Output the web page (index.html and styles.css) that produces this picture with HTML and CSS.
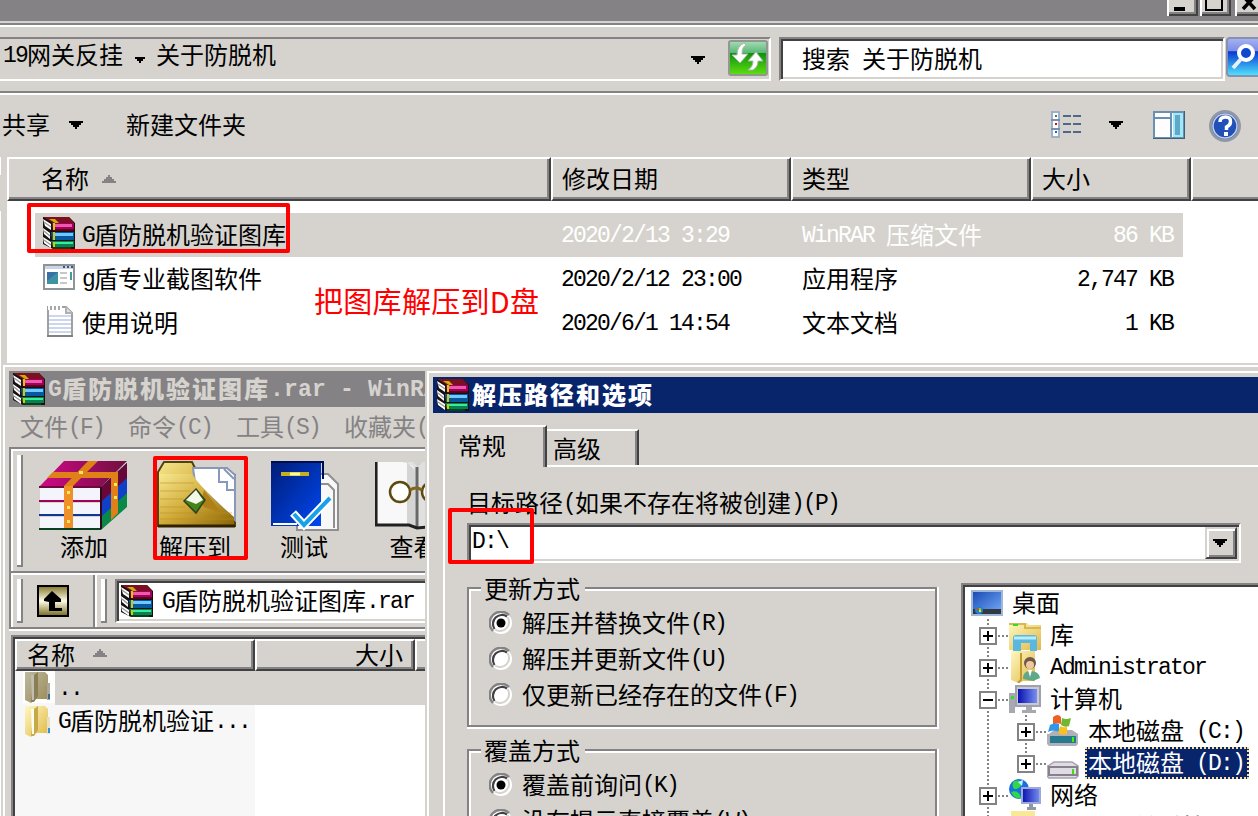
FILE: index.html
```html
<!DOCTYPE html>
<html lang="zh-CN">
<head>
<meta charset="utf-8">
<title>解压路径和选项</title>
<link rel="stylesheet" href="styles.css">
</head>
<body>
<svg class="defs" width="0" height="0" aria-hidden="true">
  <defs>
    <linearGradient id="gGreen" x1="0" y1="0" x2="0" y2="1"><stop offset="0" stop-color="#a8dcb8"/><stop offset=".34" stop-color="#5cb878"/><stop offset=".36" stop-color="#109010"/><stop offset="1" stop-color="#60e010"/></linearGradient>
    <linearGradient id="gBlue" x1="0" y1="0" x2="0" y2="1"><stop offset="0" stop-color="#a8b4f0"/><stop offset=".34" stop-color="#7c8ce8"/><stop offset=".36" stop-color="#0838d0"/><stop offset="1" stop-color="#50e8ff"/></linearGradient>
    <linearGradient id="gGold" x1="0" y1="0" x2="1" y2="1"><stop offset="0" stop-color="#f8e890"/><stop offset=".5" stop-color="#d0aa38"/><stop offset="1" stop-color="#8a6404"/></linearGradient>
    <linearGradient id="gFolder" x1="0" y1="0" x2="1" y2="1"><stop offset="0" stop-color="#fff8c0"/><stop offset="1" stop-color="#e0b848"/></linearGradient>
    <linearGradient id="gPlum" x1="0" y1="0" x2="1" y2="0"><stop offset="0" stop-color="#d00888"/><stop offset="1" stop-color="#70103c"/></linearGradient>
    <linearGradient id="gScreen" x1="0" y1="0" x2="1" y2="0"><stop offset="0" stop-color="#0810b0"/><stop offset="1" stop-color="#7890f0"/></linearGradient>
    <linearGradient id="gDesk" x1="0" y1="0" x2="1" y2="1"><stop offset="0" stop-color="#1848b0"/><stop offset="1" stop-color="#78b0ff"/></linearGradient>
    <linearGradient id="gUp" x1="0" y1="0" x2="0" y2="1"><stop offset="0" stop-color="#807428"/><stop offset=".5" stop-color="#fffce8"/><stop offset="1" stop-color="#746820"/></linearGradient>
    <linearGradient id="gNavy" x1="0" y1="0" x2="1" y2="1"><stop offset="0" stop-color="#001c78"/><stop offset="1" stop-color="#0048f0"/></linearGradient>
    <symbol id="books" viewBox="0 0 32 32">
      <path d="M0 0h26l6 6v26H10L0 27z" fill="#181010"/>
      <path d="M0 0h26l5 6H10z" fill="#7c1020"/><path d="M6 2h6l4 4h-4z" fill="#c8b000"/>
      <path d="M9 6h22v7H10z" fill="#a00060"/><path d="M12 7h17v3H12z" fill="#f058b0"/><path d="M9 12h22v2H11z" fill="#600018"/>
      <path d="M8 15h23v8H9z" fill="#0858a0"/><path d="M12 16h18v3H12z" fill="#70c8ff"/>
      <path d="M8 24h23v6H10z" fill="#088050"/><path d="M12 25h18v2H12z" fill="#30f0a0"/><path d="M10 30h18v2H10z" fill="#084018"/>
      <path d="M0 2l8 5v6L2 9zM0 11l7 5v6l-6-5zM0 20l8 5v6l-7-5z" fill="#fff"/>
      <path d="M1 5l7 5M1 14l6 5M1 23l7 5" stroke="#989898" stroke-width="1.500"/>
      <path d="M10 6h2v7h-2zM10 15h2v8h-2zM10 25h2v5h-2z" fill="#d8c800"/>
    </symbol>
    <symbol id="folder" viewBox="0 0 28 32">
      <path d="M1 1h20l3 3v24H12L7 32 1 29z" fill="url(#gFolder)"/>
      <path d="M10 4l4-3v24l-4 6H7z" fill="#c8a848"/><path d="M7 4h3v25H8z" fill="#fffff0"/>
      <path d="M23 12h3v17h-3z" fill="#e8e0c0"/><path d="M24 23h2v5h-2z" fill="#3090d8"/>
    </symbol>
    <symbol id="plus" viewBox="0 0 18 18"><path d="M1 1h16v16H1z" fill="#fff" stroke="#848284" stroke-width="2"/><path d="M4 9h10M9 4v10" stroke="#000" stroke-width="2"/></symbol>
    <symbol id="minus" viewBox="0 0 18 18"><path d="M1 1h16v16H1z" fill="#fff" stroke="#848284" stroke-width="2"/><path d="M4 9h10" stroke="#000" stroke-width="2"/></symbol>
    <symbol id="down" viewBox="0 0 14 8"><path d="M0 0h14v2h-2v2h-2v2H8v2H6V6H4V4H2V2H0z"/></symbol>
    <symbol id="up" viewBox="0 0 14 8"><path d="M0 8h14V6h-2V4h-2V2H8V0H6v2H4v2H2v2H0z" fill="#848284"/></symbol>
    <symbol id="radio" viewBox="0 0 24 24">
      <circle cx="12" cy="12" r="11" fill="#fff"/>
      <path d="M4 20A11 11 0 0 1 20 4" fill="none" stroke="#848284" stroke-width="2.4"/>
      <path d="M5.5 18A9 9 0 0 1 18 5.5" fill="none" stroke="#424142" stroke-width="2.2"/>
      <path d="M6 18.5A9 9 0 0 0 18.500 6" fill="none" stroke="#d6d3ce" stroke-width="2"/>
    </symbol>
    <symbol id="branch" viewBox="0 0 44 32"><path d="M23 0v32M33 17h11" stroke="#848284" stroke-width="2" stroke-dasharray="2 2"/></symbol>
  </defs>
</svg>

<div class="desktop">
  <section class="explorer">
    <div class="caption">
      <span class="cap-btn"><svg width="31" height="16"><path d="M7 7h11v4H7z"/></svg></span>
      <span class="cap-btn"><svg width="31" height="16"><path d="M6-6h16v16H6z" fill="none" stroke="#000" stroke-width="2"/></svg></span>
      <span class="cap-btn cap-close"><svg width="31" height="16"><path d="M8 9L20-4M8-4l12 13" stroke="#000" stroke-width="3.500"/></svg></span>
    </div>
    <div class="edge"></div>
    <div class="nav">
      <div class="address">
        <span class="crumb"><i>19</i>网关反挂</span>
        <svg class="crumb-arrow" width="10" height="6"><path d="M0 0h10v2H8v2H6v2H4V4H2V2H0z"/></svg>
        <span class="crumb">关于防脱机</span>
        <svg class="address-arrow" width="14" height="8"><use href="#down"/></svg>
        <svg class="refresh" width="42" height="38"><rect x="2" y="2" width="38" height="34" rx="2" fill="url(#gGreen)" stroke="#909890" stroke-width="2"/><path d="M17 7q-4 2-4 9h6l-8 9-8-8h5q0-9 7-12zM24 32q5-3 5-9h5l-7-9-8 9h5q0 6-5 9z" transform="translate(2 -1)" fill="#fff" stroke="#a8b8a8"/></svg>
      </div>
      <div class="search"><span>搜索<i> </i>关于防脱机</span></div>
      <svg class="search-btn" width="40" height="42"><rect x="1" y="1" width="38" height="38" rx="3" fill="url(#gBlue)" stroke="#8890b0" stroke-width="2"/><circle cx="20" cy="16" r="7" fill="#1048d0" stroke="#fff" stroke-width="4"/><path d="M15 22l-8 9" stroke="#e8f0f8" stroke-width="4"/></svg>
    </div>
    <div class="rule"></div>
    <div class="toolbar">
      <span>共享</span>
      <svg class="share-arrow" width="14" height="8"><use href="#down"/></svg>
      <span class="new-folder">新建文件夹</span>
      <svg class="view-icon" width="31" height="28"><path d="M1 1h7v25H1z" fill="#fff" stroke="#a0b0c8" stroke-width="2"/><path d="M0 9h9M0 18h9" stroke="#7890b0" stroke-width="2"/><path d="M4 4h2v2H4z" fill="#388058"/><path d="M4 12h2v2H4z" fill="#e00"/><path d="M4 20h2v2H4z" fill="#2060d0"/><path d="M12 5h8M22 5h8M12 13h8M22 13h8M12 21h8M22 21h8" stroke="#506888" stroke-width="2"/></svg>
      <svg class="view-arrow" width="14" height="8"><use href="#down"/></svg>
      <svg class="pane-icon" width="32" height="28"><path d="M1 1h30v26H1z" fill="#fffcff" stroke="#6890b0" stroke-width="2"/><path d="M2 7h16M18 2v24" stroke="#6890b0" stroke-width="2"/><path d="M20 2h10v24H20z" fill="#a0e8f8"/><path d="M22 4h5v20h-5z" fill="#60a8c8"/><path d="M0 28h32V0" fill="none" stroke="#406078" stroke-width="2"/></svg>
      <svg width="32" height="32"><circle cx="16" cy="16" r="14.500" fill="#2050b8" stroke="#9098a8" stroke-width="3"/><circle cx="16" cy="16" r="12" fill="none" stroke="#c8d0e0" stroke-width="1.500"/><path d="M11 12q0-5 5.500-5t5 5q0 3-4 5v3" fill="none" stroke="#fff" stroke-width="3.500"/><path d="M15 22h4v4h-4z" fill="#fff"/></svg>
    </div>
    <div class="files-row">
      <div class="strip"></div>
      <div class="files">
        <div class="file-head">
          <span class="col-name">名称 <svg width="14" height="8"><use href="#up"/></svg></span><span class="col-date">修改日期</span><span class="col-type">类型</span><span class="col-size">大小</span><span class="col-rest"></span>
        </div>
        <div class="file-body">
          <div class="file selected"><svg width="32" height="32"><use href="#books"/></svg><span class="f-name"><i>G</i>盾防脱机验证图库</span><span class="f-date"><i>2020/2/13 3:29</i></span><span class="f-type"><i>WinRAR </i>压缩文件</span><span class="f-size"><i>86 KB</i></span></div>
          <div class="file"><svg width="32" height="32"><path d="M1 4h30v24H1z" fill="#fff" stroke="#8c9498" stroke-width="2"/><path d="M2 5h28v3H2z" fill="#ccd4e8"/><path d="M20 5h2v2h-2zM24 5h2v2h-2zM28 5h2v2h-2z" fill="#405878"/><path d="M4 11h11v12H4z" fill="#3f93a0"/><path d="M4 11h11L4 20z" fill="#3870a8"/><path d="M17 12h7M17 17h7M17 22h7" stroke="#c8c8c8" stroke-width="2"/><path d="M27 11h2v8h-2z" fill="#4898a0"/></svg><span class="f-name"><i>g</i>盾专业截图软件</span><span class="f-date"><i>2020/2/12 23:00</i></span><span class="f-type">应用程序</span><span class="f-size"><i>2,747 KB</i></span></div>
          <div class="file"><svg width="32" height="32"><path d="M5 2h18l6 6v23H5z" fill="#fff" stroke="#a0a0a0" stroke-width="2"/><path d="M4 31h26" stroke="#808080" stroke-width="2"/><path d="M23 2v6h6" fill="#e0e0e0" stroke="#b0b0b0" stroke-width="2"/><path d="M6 1v4M10 1v4M14 1v4M18 1v4" stroke="#fff" stroke-width="2"/><path d="M8 1v4M12 1v4M16 1v4" stroke="#a8a8a8" stroke-width="2"/><path d="M6 11h22M6 15h22M6 19h22M6 23h22M6 27h22" stroke="#ccd6ec" stroke-width="2"/></svg><span class="f-name">使用说明</span><span class="f-date"><i>2020/6/1 14:54</i></span><span class="f-type">文本文档</span><span class="f-size"><i>1 KB</i></span></div>
        </div>
        <div class="files-edge"></div>
      </div>
    </div>
  </section>

  <section class="winrar">
    <div class="wr-title"><svg width="32" height="32"><use href="#books"/></svg><b><i>G</i>盾防脱机验证图库<i>.rar - WinRAR</i></b></div>
    <div class="wr-menu"><span>文件<i>(F)</i></span><span>命令<i>(C)</i></span><span>工具<i>(S)</i></span><span>收藏夹<i>(O)</i></span></div>
    <div class="wr-bars">
      <div class="wr-tools">
        <span class="grip"></span>
        <div class="tool t-add"><svg width="90" height="74" viewBox="0 0 90 74"><path d="M62 28L88 4v44L62 71z" fill="#0a8848"/><path d="M62 28L88 4v30L62 58z" fill="#1040c8"/><path d="M62 28L88 4v15L62 43z" fill="#680838"/><path d="M1 27L25 2h63L62 28z" fill="url(#gPlum)"/><path d="M1 29h61v13H1zM1 44h61v12H1zM1 58h61v12H1z" fill="#f4f4fc"/><path d="M0 28h62" stroke="#70083c" stroke-width="2"/><path d="M0 42h62" stroke="#a00058" stroke-width="2"/><path d="M0 56h62" stroke="#103890" stroke-width="2"/><path d="M0 70h62" stroke="#084020" stroke-width="2"/><path d="M25 27L49 2h10L34 27v42h-9zM14 13h65v41l-7 7V19H8z" fill="#e08018"/><path d="M25 27h9v42h-9z" fill="#f09028"/><path d="M28 32h3v3h-3zM28 47h3v3h-3zM28 61h3v3h-3zM40 12h4v3h-4zM75 24h3v3h-3zM75 37h3v3h-3z" fill="#ffe860"/><path d="M62 28v42" stroke="#300818" stroke-width="2"/></svg><span>添加</span></div>
        <div class="tool t-extract"><svg width="80" height="74" viewBox="0 0 80 74"><path d="M1 13L7 3h28l4 8 39 5v51H1z" fill="url(#gGold)" stroke="#54430a" stroke-width="2"/><path d="M36 9h34l8 7v45L38 23z" fill="#fff" stroke="#8898b8" stroke-width="2"/><path d="M62 9v14h8v8h8M67 10l10 10" fill="none" stroke="#8898b8" stroke-width="2"/><path d="M2 15h33q12 18 42 43v9H2z" fill="url(#gGold)"/><path d="M47 31l18 23-18-6-3-5z" fill="#b08018"/><path d="M3 24h34M3 32h30M3 40h24M3 48h26M3 54h72M3 60h74" stroke="#b88c20" opacity=".55"/><path d="M39 30l9 11-9 13-12-12z" fill="#448418" stroke="#304020" stroke-width="1.500"/><path d="M39 31l7 10-7 4-10-4z" fill="#f4f8e8"/><path d="M1 67h77" stroke="#302200" stroke-width="3"/></svg><span>解压到</span></div>
        <div class="tool t-test"><svg width="68" height="74" viewBox="0 0 68 74"><path d="M44 15h13l10 10v46H26V60h18z" fill="#f8f8f8" stroke="#909090" stroke-width="2"/><path d="M50 25h7l6 6v38" fill="none" stroke="#909090" stroke-width="2"/><path d="M0 3h50v64H0z" fill="url(#gNavy)"/><path d="M0 3h52v17" fill="none" stroke="#000c50" stroke-width="2"/><path d="M2 65h24" stroke="#fff" stroke-width="2"/><path d="M10 15h28" stroke="#c8b020" stroke-width="4"/><path d="M19 15h10" stroke="#ffffa0" stroke-width="3"/><path d="M22 54l11 12 25-26" fill="none" stroke="#fff" stroke-width="8"/><path d="M23 55l10 11 26-27" fill="none" stroke="#18a0e8" stroke-width="4"/></svg><span>测试</span></div>
        <div class="tool t-view"><svg width="84" height="74" viewBox="0 0 84 74"><path d="M1 3v64h38l5 3 38-3V3H48l-5 5-5-5z" fill="#e0e0e0"/><path d="M3 3h24q12 2 13 8v54H3z" fill="#f8f8f8"/><path d="M32 3l8 8v54h-8z" fill="#d4d4d4"/><path d="M42 8v60" stroke="#686868" stroke-width="3"/><path d="M1 3v63h33l8 3 38-3" fill="none" stroke="#202020" stroke-width="3"/><circle cx="25" cy="33" r="10" fill="#fff" stroke="#5c4a10" stroke-width="2.500"/><circle cx="57" cy="33" r="10" fill="#fff" stroke="#5c4a10" stroke-width="2.500"/><path d="M35 31q6-4 12 0" fill="none" stroke="#806818" stroke-width="3"/></svg><span>查看</span></div>
      </div>
      <div class="wr-path">
        <div class="path-up"><span class="grip"></span><svg width="32" height="32"><path d="M1 1h30v30H1z" fill="url(#gUp)" stroke="#000" stroke-width="2"/><path d="M7 16v-2l8-8 9 8v3h-6v6h7v3H12v-9z"/></svg></div>
        <div class="path-box"><span class="grip"></span><div class="field"><svg width="32" height="32"><use href="#books"/></svg><span><i>G</i>盾防脱机验证图库<i>.rar</i></span></div></div>
      </div>
    </div>
    <div class="wr-list">
      <div class="wr-head"><span class="wh-name">名称<svg width="14" height="8"><use href="#up"/></svg></span><span class="wh-size">大小</span><span class="wh-rest"></span></div>
      <div class="wr-rows">
        <div class="wr-row"><span class="wr-icon dim"><svg width="28" height="32"><use href="#folder"/></svg></span><span class="wr-up"><i>..</i></span></div>
        <div class="wr-row"><span class="wr-icon"><svg width="28" height="32"><use href="#folder"/></svg></span><span class="wr-file"><i>G</i>盾防脱机验证<i>...</i></span></div>
      </div>
    </div>
  </section>

  <section class="dialog">
    <div class="dlg-inner">
      <div class="dlg-title"><svg width="32" height="32"><use href="#books"/></svg><b>解压路径和选项</b></div>
      <div class="tabs"><span class="tab active">常规</span><span class="tab second">高级</span><span class="tab-line"></span></div>
      <div class="page">
        <div class="label">目标路径<i>(</i>如果不存在将被创建<i>)(P)</i></div>
        <div class="combo"><i>D:\</i><span class="combo-btn"><svg width="14" height="8"><use href="#down"/></svg></span></div>
        <div class="columns">
          <div class="groups">
            <div class="group g1"><span class="legend">更新方式</span>
              <div class="option"><svg width="24" height="24"><use href="#radio"/><circle cx="12" cy="12" r="4.500"/></svg><span>解压并替换文件<i>(R)</i></span></div>
              <div class="option"><svg width="24" height="24"><use href="#radio"/></svg><span>解压并更新文件<i>(U)</i></span></div>
              <div class="option"><svg width="24" height="24"><use href="#radio"/></svg><span>仅更新已经存在的文件<i>(F)</i></span></div>
            </div>
            <div class="group g2"><span class="legend">覆盖方式</span>
              <div class="option"><svg width="24" height="24"><use href="#radio"/><circle cx="12" cy="12" r="4.500"/></svg><span>覆盖前询问<i>(K)</i></span></div>
              <div class="option"><svg width="24" height="24"><use href="#radio"/></svg><span>没有提示直接覆盖<i>(W)</i></span></div>
            </div>
          </div>
          <div class="tree">
            <div class="node root"><svg width="32" height="32"><path d="M1 4h30v24H1z" fill="url(#gDesk)" stroke="#a0b8d8" stroke-width="2"/><path d="M2 22h28v5H2z" fill="#303840"/><circle cx="8" cy="23" r="4" fill="#2080d8"/><path d="M6 21h2v2H6z" fill="#f04020"/><path d="M8 21h2v2H8z" fill="#60e020"/><path d="M8 23h2v2H8z" fill="#ffe000"/></svg><span>桌面</span></div>
            <div class="node"><svg width="44" height="32"><use href="#branch"/><use href="#plus" x="14" y="8" width="18" height="18"/></svg><svg width="32" height="32"><path d="M0 4h18l2 2h12v25H0z" fill="url(#gFolder)"/><path d="M0 5h16v4h16" fill="none" stroke="#d8b850" stroke-width="2"/><path d="M4 6h5" stroke="#30e020" stroke-width="2"/><path d="M4 32V19q0-3 3-3h18q3 0 3 3v13h-7v-8h-9v8z" fill="#58b8e0"/><path d="M5 19h22" stroke="#b8ecff" stroke-width="3"/></svg><span>库</span></div>
            <div class="node"><svg width="44" height="32"><use href="#branch"/><use href="#plus" x="14" y="8" width="18" height="18"/></svg><svg width="32" height="32"><path d="M2 0h24v30H14l-4 2-8-3z" fill="url(#gFolder)"/><path d="M12 2v27l-3 3" fill="none" stroke="#c09830" stroke-width="2"/><circle cx="21" cy="12" r="6" fill="#705848"/><circle cx="21" cy="14" r="4" fill="#f0c8a0"/><path d="M14 28q0-8 7-8 9 0 10 7l-7 3z" fill="#60a888"/><path d="M19 19h4l-2 7z" fill="#fff"/></svg><span><i>Administrator</i></span></div>
            <div class="node"><svg width="44" height="32"><use href="#branch"/><use href="#minus" x="14" y="8" width="18" height="18"/></svg><svg width="32" height="32"><path d="M0 10h6v20H0z" fill="#a8a8b0"/><path d="M2 13h3v3H2z" fill="#30e020"/><path d="M7 3h24v20H7z" fill="#c8c8d0" stroke="#a0a0b0" stroke-width="2"/><path d="M9 6h19v14H9z" fill="url(#gScreen)"/><path d="M17 24h6v3h4v3H13v-3h4z" fill="#a8a8b0"/></svg><span>计算机</span></div>
            <div class="node"><svg width="82" height="32"><path d="M23 0v32M61 0v32M71 17h11" stroke="#848284" stroke-width="2" stroke-dasharray="2 2"/><use href="#plus" x="52" y="8" width="18" height="18"/></svg><svg width="32" height="32"><path d="M2 19l5-4h18l6 4v10l-2 2H2l-2-2V19z" fill="#b0b0b8"/><path d="M3 21h26v7H3z" fill="#287890"/><path d="M25 22h2v5h-2z" fill="#40f010"/><path d="M6 2q5-4 8 0v7q-5-2-8 1z" fill="#f06020"/><path d="M15 3q4 2 9 0l-2 8q-4 2-8-1z" fill="#70b830"/><path d="M3 10q5-3 9-1v8q-6-3-11 0z" fill="#3098e8"/><path d="M13 11q3 2 7 1v7q-5 2-9-1z" fill="#f8c020"/></svg><span>本地磁盘<i> (C:)</i></span></div>
            <div class="node"><svg width="82" height="32"><path d="M23 0v32M61 0v17M71 17h11" stroke="#848284" stroke-width="2" stroke-dasharray="2 2"/><use href="#plus" x="52" y="8" width="18" height="18"/></svg><svg width="32" height="32"><path d="M1 19l6-4h18l6 4v10l-2 2H2l-2-2V19z" fill="#e0dce4" stroke="#a8a0b0" stroke-width="1.500"/><path d="M2 20h28v8H2z" fill="none" stroke="#88808c" stroke-width="2"/><path d="M25 22h2v5h-2z" fill="#40e010"/></svg><span class="picked">本地磁盘<i> (D:)</i></span></div>
            <div class="node"><svg width="44" height="32"><use href="#branch"/><use href="#plus" x="14" y="8" width="18" height="18"/></svg><svg width="32" height="32"><circle cx="10" cy="10" r="10" fill="#1870e0"/><path d="M5 2q7-2 7 3t-7 5q-3-4 0-8zM2 13q8-3 10 6-6 2-10-6z" fill="#30d848"/><path d="M9 3l5-2-1 6z" fill="#c0f8ff"/><path d="M13 9h18v15H13z" fill="url(#gScreen)" stroke="#a0a8d8" stroke-width="2"/><path d="M20 25h4v3h3v3h-9v-3h2z" fill="#9098a8"/></svg><span>网络</span></div>
            <div class="node"><svg width="44" height="32"><use href="#branch"/></svg><svg width="32" height="32"><path d="M2 0h24v30H2z" fill="#f8e898"/></svg><span><i>2019 </i>网关反挂</span></div>
          </div>
        </div>
      </div>
    </div>
  </section>

  <div class="mark m-file"></div>
  <div class="mark m-extract"></div>
  <div class="mark m-path"></div>
  <div class="note">把图库解压到D盘</div>
</div>
</body>
</html>
```
FILE: styles.css
```css
* { box-sizing: border-box; }
html, body { margin: 0; overflow: hidden; }
body {
  font: 24px/24px "Noto Sans CJK SC", "Liberation Sans", sans-serif;
  color: #000;
}
i {
  font: normal 23px/0 "Liberation Mono", monospace;
  letter-spacing: -1.8px;
  vertical-align: 2px;
  white-space: pre;
}
b i { font-weight: bold; letter-spacing: .2px; }
span, b { white-space: nowrap; }
svg { display: block; flex: none; }
.defs { position: absolute; }
.desktop { position: relative; width: 1258px; height: 816px; overflow: hidden; background: #d6d3ce; }

/* Explorer window */
.explorer { height: 816px; }
.caption { display: flex; gap: 2px; height: 21px; padding-left: 1167px; background: #848284; }
.cap-btn { flex: none; width: 31px; height: 16px; background: #d6d3ce; border: solid #fff; border-width: 0 0 0 2px; box-shadow: inset -2px -2px #424142, inset -4px -4px #848284; }
.cap-btn svg { margin-left: -2px; }
.cap-close { margin-left: 2px; }
.edge { height: 6px; border-bottom: 2px solid #fff; background: linear-gradient(#d6d3ce 2px, #848284 2px); }
.nav { display: flex; height: 64px; padding-top: 10px; }
.address { display: flex; align-items: flex-start; flex: none; width: 771px; height: 44px; padding-top: 3px; padding-left: 3px; border-top: 2px solid #848284; border-bottom: 2px solid #fff; border-right: 2px solid #fff; }
.crumb-arrow { margin: 15px 11px 0 12px; }
.address-arrow { margin: 14px 22px 0 auto; }
.refresh { margin-top: -3px; }
.search { flex: none; width: 446px; height: 44px; margin-left: 8px; padding: 7px 0 0 21px; background: #fff; border: 2px solid #848284; border-color: #848284 #fff #fff #848284; box-shadow: inset 2px 2px #424142, inset -2px -2px #d6d3ce; }
.search-btn { margin-left: 1px; }
.rule { height: 4px; background: #848284; border-bottom: 2px solid #fff; }
.toolbar { display: flex; align-items: center; height: 62px; padding-left: 2px; }
.toolbar span { margin-top: -4px; }
.share-arrow { margin-left: 19px; margin-top: -2px; }
.toolbar .new-folder { margin-left: 43px; }
.view-icon { margin-left: 805px; margin-top: -2px; }
.view-arrow { margin: -2px 30px 0 27px; }
.pane-icon { margin-right: 24px; margin-top: -2px; }
.files-row { display: flex; height: 659px; }
.strip { flex: none; width: 7px; background: linear-gradient(#fff 18px, #d6d3ce 18px 54px, #fff 54px) 0 0 / 1px 100% no-repeat; }
.files { flex: none; width: 1300px; }
.file-head { display: flex; height: 44px; }
.file-head > span { flex: none; height: 44px; padding-top: 7px; padding-left: 9px; border: 2px solid #424142; border-color: #fff #424142 #424142 #fff; box-shadow: inset -2px -2px #848284; }
.file-head .col-name { display: flex; width: 544px; padding-left: 32px; }
.col-name svg { margin: 9px 0 0 13px; }
.col-date, .col-type { width: 240px; }
.col-size { width: 160px; }
.col-rest { width: 80px; }
.file-body { height: 162px; padding-top: 12px; background: #fff; }
.files-edge { height: 4px; border-bottom: 2px solid #fff; }
.file { display: flex; align-items: center; width: 1148px; height: 44px; margin-left: 28px; padding: 0 8px; }
.file span { margin-top: -3px; }
.file svg { margin-top: -4px; }
.selected { background: #d6d3ce; color: #fff; }
.selected .f-name { color: #000; }
.f-name { width: 486px; padding-left: 7px; }
.f-date { width: 241px; }
.f-type { width: 240px; }
.file .f-size { flex: 1; margin-right: 2px; text-align: right; }

/* Archive manager window */
.winrar { position: absolute; left: 3px; top: 365px; width: 422px; height: 451px; overflow: hidden; padding: 4px 0 0 4px; border: solid #fff; border-width: 2px 0 0 2px; background: #d6d3ce; }
.wr-title { display: flex; align-items: center; gap: 3px; height: 36px; padding-left: 4px; background: #848284; color: #d6d3ce; }
b { letter-spacing: 2px; font-weight: 900; margin-top: -2px; }
.wr-menu { display: flex; height: 40px; padding: 7px 0 0 11px; color: #848284; }
.wr-menu span { flex: none; width: 108px; }
.wr-bars { height: 182px; border: 2px solid #848284; border-right: 0; box-shadow: inset 2px 2px #fff, 0 2px #fff; }
.grip { flex: none; width: 6px; background: #fff; border: solid #848284; border-width: 0 2px 2px 0; }
.wr-tools { display: flex; height: 126px; padding: 6px 0 6px 6px; border-bottom: 2px solid #fff; background: linear-gradient(#848284, #848284) bottom / 100% 2px no-repeat; }
.tool { display: flex; flex-direction: column; align-items: center; flex: none; height: 112px; padding-top: 4px; }
.tool svg { margin-bottom: 1px; }
.t-add { margin-left: 16px; }
.t-extract { margin-left: 28px; }
.t-extract span { margin-left: -4px; }
.t-test { margin-left: 34px; }
.t-test span { margin-left: -2px; }
.t-view { margin-left: 36px; }
.t-view span { margin-left: -7px; }
.wr-path { display: flex; height: 52px; }
.path-up { display: flex; flex: none; width: 84px; padding: 4px 0 4px 6px; border-right: 2px solid #848284; box-shadow: 2px 0 #fff; }
.path-up svg { margin: 6px 0 0 14px; }
.path-box { display: flex; flex: none; width: 340px; padding: 4px 0 4px 6px; }
.field { display: flex; flex: none; width: 360px; height: 44px; margin-left: 8px; padding: 2px 4px; background: #fff; border: 2px solid #848284; border-bottom-color: #fff; box-shadow: inset 2px 2px #424142, inset 0 -2px #d6d3ce; }
.field svg { margin-top: 2px; }
.field span { margin: 5px 0 0 9px; }
.wr-list { display: flex; flex-direction: column; height: 183px; margin: 6px 0 0 2px; border: solid #848284; border-width: 2px 0 0 2px; box-shadow: inset 2px 2px #424142; padding: 2px 0 0 2px; }
.wr-head { display: flex; height: 32px; }
.wr-head > span { flex: none; height: 32px; border: 2px solid #424142; border-color: #fff #424142 #424142 #fff; box-shadow: inset -2px -2px #848284; background: #d6d3ce; padding-top: 1px; line-height: 24px; }
.wr-head .wh-name { display: flex; width: 240px; padding-left: 10px; }
.wh-name svg { margin: 7px 0 0 18px; }
.wr-head .wh-size { width: 160px; text-align: right; padding-right: 10px; }
.wh-rest { width: 40px; }
.wr-rows { flex: 1; background: linear-gradient(90deg, #f7f7f7 240px, #fff 240px); }
.wr-row { display: flex; height: 34px; }
.wr-icon { width: 32px; margin-left: 8px; padding-left: 1px; }
.dim { background: #fff; height: 32px; }
.dim svg { filter: brightness(.75) saturate(.6); }
.wr-up { flex: 1; background: #d6d3ce; padding: 4px 0 0 3px; }
.wr-file { padding: 3px 0 0 3px; }

/* Extraction dialog */
.dialog { position: absolute; left: 425px; top: 367px; width: 860px; height: 449px; overflow: hidden; padding: 4px 0 0 2px; background: #d6d3ce; }
.dlg-inner { height: 460px; padding: 4px 0 0 4px; border: solid #fff; border-width: 2px 0 0 2px; }
.dlg-title { display: flex; align-items: center; gap: 3px; height: 36px; padding-left: 4px; background: #08246b; color: #fff; }
.tabs { display: flex; align-items: flex-end; height: 52px; margin-left: 10px; }
.tab { flex: none; border-top: 2px solid #fff; border-right: 2px solid #424142; box-shadow: inset -2px 0 #848284; }
.active { width: 104px; height: 42px; margin-bottom: -2px; padding: 6px 0 0 13px; border-left: 2px solid #fff; border-top-left-radius: 4px; }
.second { width: 92px; height: 36px; padding: 5px 0 0 6px; }
.tab-line { flex: 1; }
.page { height: 402px; margin-left: 10px; padding: 26px 0 0 22px; border-left: 2px solid #fff; background: linear-gradient(#fff, #fff) 102px 0 / 100% 2px no-repeat; }
.label { height: 32px; margin-top: -1px; white-space: nowrap; }
.combo { display: flex; justify-content: space-between; width: 774px; height: 40px; padding: 2px 2px 2px 4px; margin-top: 1px; background: #fff; border: 2px solid #848284; border-color: #848284 #fff #fff #848284; box-shadow: inset 2px 2px #424142, inset -2px -2px #d6d3ce; }
.combo > i { line-height: 31px; margin-left: -1px; }
.combo-btn { width: 32px; height: 32px; padding: 10px 0 0 6px; background: #d6d3ce; border: 2px solid #d6d3ce; border-right-color: #424142; border-bottom-color: #424142; box-shadow: inset 2px 2px #fff, inset -2px -2px #848284; }
.columns { display: flex; gap: 22px; padding-top: 20px; }
.groups { width: 472px; flex: none; padding-top: 4px; }
.group { border: 2px solid #848284; box-shadow: inset 2px 2px #fff, 0 2px #fff, 2px 0 #fff, 2px 2px #fff; width: 470px; padding: 0 0 0 20px; }
.g1 { height: 140px; margin-bottom: 22px; }
.g2 { height: 160px; }
.legend { display: block; width: 104px; margin: -13px 0 11px -8px; padding-left: 3px; background: #d6d3ce; }
.option { display: flex; gap: 9px; height: 36px; }
.option span { margin-top: -1px; }
.tree { flex: none; width: 330px; height: 300px; padding: 2px 0 0 2px; background: #fff; border: solid #848284; border-width: 2px 0 0 2px; box-shadow: inset 2px 2px #424142; }
.node { display: flex; height: 32px; }
.root { padding-left: 6px; }
.node > span { margin: 3px 0 0 9px; }
.node .picked { width: 164px; height: 32px; margin: 0 0 0 6px; padding: 3px 3px 0 3px; background: #08246b; color: #fff; outline: 2px dotted #ffdf94; outline-offset: -2px; }

/* Annotations */
.mark { position: absolute; border: 4px solid #f00; border-radius: 2px; }
.m-file { left: 27px; top: 203px; width: 263px; height: 50px; }
.m-extract { left: 153px; top: 456px; width: 95px; height: 104px; }
.m-path { left: 448px; top: 508px; width: 86px; height: 56px; }
.note { position: absolute; left: 314px; top: 285px; font-size: 29px; line-height: 30px; letter-spacing: .3px; color: #f00; white-space: nowrap; }
```
